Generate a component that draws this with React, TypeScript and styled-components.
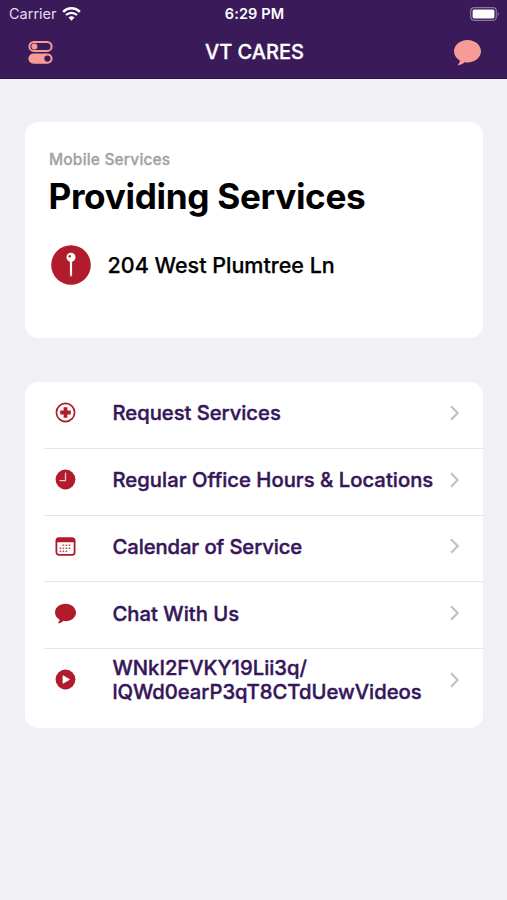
import React from "react";
import styled, { createGlobalStyle } from "styled-components";

const GlobalStyle = createGlobalStyle`
  * { box-sizing: border-box; }
  body { margin: 0; background: #f0f0f5; font-family: Inter, "Liberation Sans", sans-serif; }
`;
const Screen = styled.main`
  width: 507px;
  height: 900px;
  background: #f0f0f5;
  overflow: hidden;
`;
const Header = styled.header`
  height: 79px;
  background: #3b1a59;
  border-bottom: 1px solid #2f124b;
  color: #fff;
`;
const StatusBar = styled.div`
  height: 26px;
  display: grid;
  grid-template-columns: 1fr auto 1fr;
  align-items: center;
  padding: 0 7px 0 9px;
`;
const Carrier = styled.div`
  display: flex;
  align-items: center;
  gap: 5px;
  font-size: 14.5px;
  line-height: 27px;
  color: #e4dceb;
`;
const Time = styled.div`
  font-size: 14.5px;
  font-weight: 600;
  line-height: 27px;
  letter-spacing: 0.1px;
`;
const BatteryBox = styled.div`
  display: flex;
  justify-content: flex-end;
`;
const NavBar = styled.div`
  height: 52px;
  display: grid;
  grid-template-columns: 1fr auto 1fr;
  align-items: center;
  padding: 0 26px 0 28px;
`;
const NavTitle = styled.h1`
  margin: 0;
  padding-top: 1px;
  font-size: 20px;
  font-weight: 500;
  -webkit-text-stroke: 0.3px currentColor;
  line-height: 51px;
`;
const NavEnd = styled.div`
  display: flex;
  justify-content: flex-end;
`;
const Card = styled.section`
  width: 458px;
  margin: 43px 0 0 25px;
  background: #fff;
  border-radius: 13px;
`;
const ServiceCard = styled(Card)`
  height: 216px;
  padding: 28px 24px 0;
`;
const Eyebrow = styled.div`
  font-size: 15.5px;
  font-weight: 500;
  -webkit-text-stroke: 0.3px currentColor;
  line-height: 20px;
  letter-spacing: 0.18px;
  color: #a2a2a6;
`;
const Headline = styled.h2`
  margin: 3px 0 0 -0.5px;
  font-size: 35.2px;
  font-weight: 700;
  line-height: 46px;
  letter-spacing: -0.33px;
  color: #000;
  white-space: nowrap;
`;
const Address = styled.div`
  display: flex;
  align-items: center;
  gap: 17px;
  margin: 26px 0 0 1.5px;
  height: 40px;
  font-size: 21.5px;
  font-weight: 500;
  -webkit-text-stroke: 0.25px currentColor;
  color: #000;
  white-space: nowrap;
`;
const MenuCard = styled(Card)`
  height: 346px;
  margin-top: 44px;
  padding-left: 19px;
`;
const Row = styled.div<{ $last?: boolean }>`
  height: 66.8px;
  display: grid;
  grid-template-columns: 68.5px 1fr 34px;
  align-items: center;
  padding-bottom: ${(p) => (p.$last ? "6px" : "4px")};
  border-bottom: ${(p) => (p.$last ? "0" : "1px solid #e5e5e8")};
`;
const IconSlot = styled.div`
  display: flex;
  padding-left: 11px;
`;
const Label = styled.div<{ $tracking: number }>`
  padding-top: 1px;
  font-size: 20.25px;
  font-weight: 500;
  -webkit-text-stroke: 0.4px currentColor;
  line-height: 24.5px;
  letter-spacing: ${(p) => p.$tracking}px;
  color: #35165a;
  white-space: pre;
`;

const RED = "#b01c2b";
const PINK = "#f79b97";

const Wifi = () => (
  <svg width="19" height="14" viewBox="0 0 19 14" fill="none" stroke="#fff">
    <path d="M1.1 4.8a12 12 0 0 1 16.8 0" strokeWidth="2.5" />
    <path d="M4 8a8 8 0 0 1 11 0" strokeWidth="2.3" />
    <path d="M6.5 10.6a4.4 4.4 0 0 1 6 0L9.5 13.7z" fill="#fff" stroke="none" />
  </svg>
);
const Battery = () => (
  <svg width="30" height="14" viewBox="0 0 30 14">
    <rect x=".7" y=".7" width="25.6" height="12.6" rx="3.5" fill="none" stroke="#8b77a0" strokeWidth="1.2" />
    <rect x="2.6" y="2.6" width="21.8" height="8.8" rx="1.6" fill="#fff" />
    <path d="M27.7 4.7q2.2 2.3 0 4.6z" fill="#8b77a0" />
  </svg>
);
const Toggles = () => (
  <svg width="25" height="24" viewBox="0 -0.5 25 24">
    <rect x="1.4" y="1.4" width="22.2" height="9" rx="4.5" fill="none" stroke={PINK} strokeWidth="2" />
    <circle cx="6.4" cy="5.9" r="3" fill={PINK} />
    <rect x=".4" y="13" width="24.2" height="10.2" rx="5.1" fill={PINK} />
    <circle cx="19.4" cy="18.1" r="3.1" fill="#3b1a59" />
  </svg>
);
const Bubble = ({ size, color }: { size: number; color: string }) => (
  <svg width={size} height={size} viewBox="0 0 26 26">
    <path
      d="M13 1C5.8 1 0 5.8 0 11.9c0 3.5 2 6.6 5.2 8.5.5.3.6.7.4 1.2-.4 1-.9 1.8-1.5 2.6-.5.7-.1 1.2.7 1 2.5-.5 3.8-1.5 5.1-2.5.4-.3.7-.4 1.2-.3.6.1 1.3.2 1.9.2 7.2 0 13-4.7 13-10.7S20.2 1 13 1z"
      fill={color}
    />
  </svg>
);
const Pin = () => (
  <svg width="40" height="40" viewBox="0 0 40 40">
    <circle cx="20" cy="20" r="19.8" fill={RED} />
    <circle cx="20" cy="12.2" r="4.5" fill="#fff" />
    <circle cx="18.8" cy="11.3" r="1.2" fill={RED} />
    <path d="M18.9 16h2.2v13.5L20 32.3l-1.1-2.8z" fill="#fff" />
  </svg>
);
const Cross = () => (
  <svg width="21" height="21" viewBox="0 0 21 21">
    <circle cx="10.5" cy="10.5" r="9.1" fill="none" stroke={RED} strokeWidth="1.7" />
    <path d="M10.5 5.2v10.6M5.2 10.5h10.6" stroke={RED} strokeWidth="3.8" />
  </svg>
);
const Clock = () => (
  <svg width="21" height="21" viewBox="0 0 21 21">
    <circle cx="10.5" cy="10.5" r="9.9" fill={RED} />
    <path d="M10.5 4.2v7.4H5" fill="none" stroke="#f3c9cc" strokeWidth="1.3" strokeLinecap="round" />
  </svg>
);
const Calendar = () => (
  <svg width="21" height="21" viewBox="0 0 21 21">
    <rect x="1.4" y="2.2" width="18.2" height="16.6" rx="2.6" fill="#fff" stroke={RED} strokeWidth="1.8" />
    <path d="M1.4 6.3V4.5q0-2.3 2.3-2.3h13.6q2.3 0 2.3 2.3v1.8z" fill={RED} />
    <path d="M7.6 9.2h9M4.6 12.2h12M4.6 15.2h9" stroke={RED} strokeOpacity=".8" strokeWidth="1.5" strokeDasharray="1.6 1.4" />
  </svg>
);
const Play = () => (
  <svg width="21" height="21" viewBox="0 0 21 21">
    <circle cx="10.5" cy="10.5" r="9.9" fill={RED} />
    <path d="M8 6.7v7.6l6.5-3.8z" fill="#fff" stroke="#fff" strokeWidth=".8" strokeLinejoin="round" />
  </svg>
);
const Chevron = () => (
  <svg width="12" height="18" viewBox="0 0 12 18" fill="none">
    <path d="M2 2.2 8.7 9 2 15.8" stroke="#c2c2c5" strokeWidth="2.2" />
  </svg>
);

const items = [
  { label: "Request Services", icon: <Cross />, tracking: -0.04 },
  { label: "Regular Office Hours & Locations", icon: <Clock />, tracking: 0.02 },
  { label: "Calendar of Service", icon: <Calendar />, tracking: -0.1 },
  { label: "Chat With Us", icon: <Bubble size={21} color={RED} />, tracking: 0 },
  { label: "WNkI2FVKY19Lii3q/\nlQWd0earP3qT8CTdUewVideos", icon: <Play />, tracking: -0.02 },
];

export default function App() {
  return (
    <Screen>
      <GlobalStyle />
      <Header>
        <StatusBar>
          <Carrier>Carrier <Wifi /></Carrier>
          <Time>6:29 PM</Time>
          <BatteryBox><Battery /></BatteryBox>
        </StatusBar>
        <NavBar>
          <Toggles />
          <NavTitle>VT CARES</NavTitle>
          <NavEnd><Bubble size={27} color={PINK} /></NavEnd>
        </NavBar>
      </Header>
      <ServiceCard>
        <Eyebrow>Mobile Services</Eyebrow>
        <Headline>Providing Services</Headline>
        <Address><Pin /><span>204 West Plumtree Ln</span></Address>
      </ServiceCard>
      <MenuCard>
        {items.map((item, i) => (
          <Row key={item.label} $last={i === items.length - 1}>
            <IconSlot>{item.icon}</IconSlot>
            <Label $tracking={item.tracking}>{item.label}</Label>
            <Chevron />
          </Row>
        ))}
      </MenuCard>
    </Screen>
  );
}
